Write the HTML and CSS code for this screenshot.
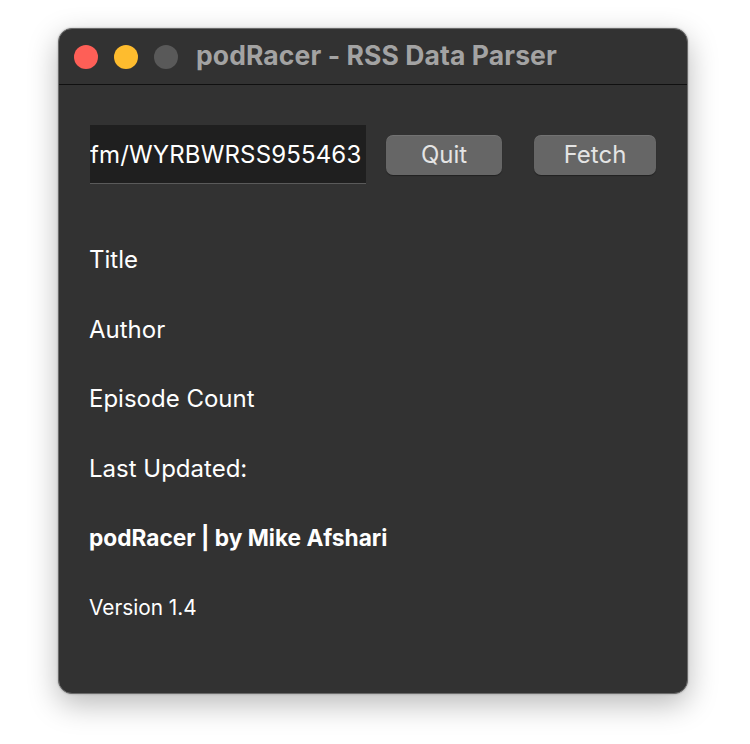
FILE: index.html
```html
<!DOCTYPE html>
<html>
<head>
<meta charset="utf-8">
<link rel="stylesheet" href="styles.css">
</head>
<body>
<div class="window">
  <div class="titlebar">
    <span class="light red"></span>
    <span class="light yellow"></span>
    <span class="light gray"></span>
    <span class="title">podRacer - RSS Data Parser</span>
  </div>
  <div class="content">
    <div class="controls">
      <div class="field"><span class="field-text">fm/WYRBWRSS955463</span></div>
      <div class="btn quit">Quit</div>
      <div class="btn fetch">Fetch</div>
    </div>
    <div class="labels">
      <div class="label">Title</div>
      <div class="label">Author</div>
      <div class="label">Episode Count</div>
      <div class="label">Last Updated:</div>
      <div class="label bold">podRacer | by Mike Afshari</div>
      <div class="label small">Version 1.4</div>
    </div>
  </div>
</div>
</body>
</html>
```
FILE: styles.css
```css
html, body {
  margin: 0;
  padding: 0;
  background: #ffffff;
}
body {
  width: 750px;
  height: 744px;
  overflow: hidden;
  font-family: Inter, "Noto Sans", sans-serif;
}
.window {
  box-sizing: border-box;
  margin: 28px 0 0 58px;
  width: 630px;
  height: 666px;
  background: #323232;
  border: 1px solid #6a6a6a;
  border-radius: 14px;
  box-shadow: 0 10px 30px rgba(0,0,0,0.28), 0 0 2px rgba(0,0,0,0.3);
  overflow: hidden;
}
.titlebar {
  height: 55px;
  border-bottom: 1px solid #101010;
  display: flex;
  align-items: center;
  padding-left: 15px;
}
.light {
  width: 24px;
  height: 24px;
  border-radius: 50%;
  margin-right: 16px;
  flex: none;
}
.red { background: #fe5f57; }
.yellow { background: #febc2e; }
.gray { background: #595959; }
.title {
  margin-left: 2px;
  margin-top: -3px;
  color: #a3a3a3;
  font-weight: 700;
  font-size: 26.5px;
  letter-spacing: 0.1px;
}
.content {
  padding: 40px 0 0 31px;
}
.controls {
  display: flex;
  align-items: center;
}
.field {
  width: 276px;
  height: 59px;
  background: #1f1f1f;
  border-bottom: 1px solid #5a5a5a;
  overflow: hidden;
  display: flex;
  align-items: center;
  padding-left: 0;
  box-sizing: border-box;
  white-space: nowrap;
}
.field-text {
  color: #ffffff;
  font-size: 24px;
  letter-spacing: 0.15px;
}
.btn {
  box-sizing: border-box;
  height: 40px;
  background: #666666;
  border-radius: 7px;
  box-shadow: 0 1px 1px rgba(0,0,0,0.35), inset 0 1px 0 rgba(255,255,255,0.08);
  color: #e4e4e4;
  font-size: 24px;
  display: flex;
  align-items: center;
  justify-content: center;
}
.quit {
  width: 116px;
  margin-left: 20px;
}
.fetch {
  width: 122px;
  margin-left: 32px;
}
.labels {
  padding-top: 41px;
  margin-left: -1px;
  display: flex;
  flex-direction: column;
}
.label {
  height: 69.5px;
  line-height: 69.5px;
  color: #ffffff;
  font-size: 24px;
}
.bold {
  font-weight: 700;
  font-size: 22.7px;
}
.small {
  font-size: 20.8px;
}
```
